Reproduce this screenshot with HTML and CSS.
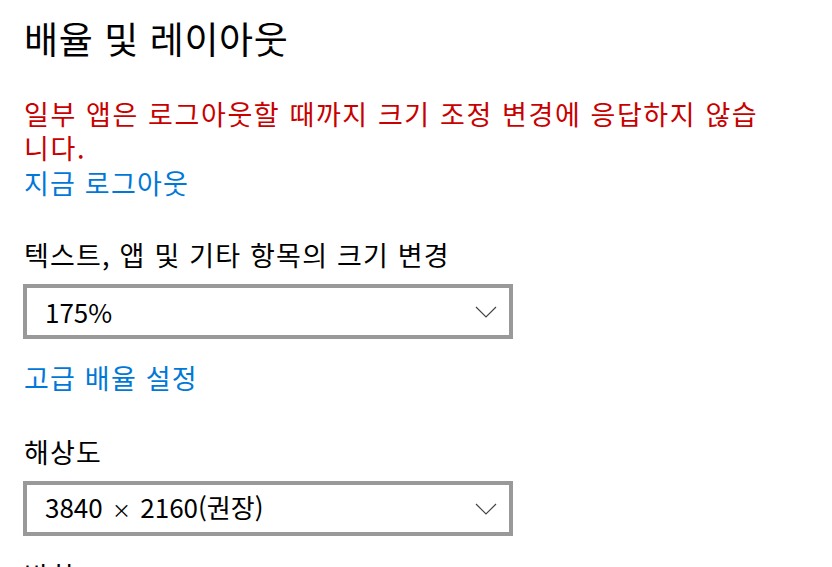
FILE: index.html
```html
<!DOCTYPE html>
<html lang="ko">
<head>
<meta charset="utf-8">
<link rel="stylesheet" href="styles.css">
</head>
<body>
<main class="page">
  <h1 class="title">배율 및 레이아웃</h1>
  <p class="warning">일부 앱은 로그아웃할 때까지 크기 조정 변경에 응답하지 않습니다.</p>
  <a class="link link-logout" href="#">지금 로그아웃</a>

  <div class="field field-scale">
    <div class="label">텍스트, 앱 및 기타 항목의 크기 변경</div>
    <div class="select">
      <span class="select-value">175%</span>
      <svg class="chevron" width="22" height="12" viewBox="0 0 22 12"><path d="M1 1 L11 11 L21 1" fill="none" stroke="#444" stroke-width="1.2"/></svg>
    </div>
  </div>

  <a class="link link-advanced" href="#">고급 배율 설정</a>

  <div class="field field-res">
    <div class="label">해상도</div>
    <div class="select">
      <span class="select-value">3840 <span class="times">×</span> 2160(권장)</span>
      <svg class="chevron" width="22" height="12" viewBox="0 0 22 12"><path d="M1 1 L11 11 L21 1" fill="none" stroke="#444" stroke-width="1.2"/></svg>
    </div>
  </div>

  <div class="field field-orient">
    <div class="label">방향</div>
  </div>
</main>
</body>
</html>
```

FILE: styles.css
```css
html, body {
  margin: 0;
  padding: 0;
  background: #ffffff;
}
body {
  font-family: "Noto Sans CJK KR", "Noto Sans", sans-serif;
  color: #000000;
  overflow: hidden;
}
.page {
  padding: 12px 0 0 24px;
  display: flex;
  flex-direction: column;
  align-items: flex-start;
}
.title {
  margin: 0;
  font-size: 37px;
  font-weight: 400;
  line-height: 52px;
  letter-spacing: 0.6px;
}
.warning {
  margin: 33px 0 0 0;
  width: 745px;
  font-size: 27px;
  line-height: 34px;
  letter-spacing: 1.6px;
  color: #c80000;
}
.link {
  font-size: 27px;
  line-height: 34px;
  letter-spacing: 1.2px;
  color: #0078d7;
  text-decoration: none;
}
.link-logout {
  margin-top: 1px;
}
.field {
  display: flex;
  flex-direction: column;
}
.field-scale {
  margin-top: 38px;
}
.label {
  font-size: 27px;
  line-height: 34px;
  letter-spacing: 1.2px;
}
.select {
  margin-top: 12px;
  margin-left: -1px;
  box-sizing: border-box;
  width: 490px;
  height: 55px;
  border: 4px solid #999999;
  display: flex;
  align-items: center;
  justify-content: space-between;
  padding: 0 12px 0 18px;
}
.select-value {
  font-size: 26px;
  line-height: 34px;
}
.times {
  font-size: 19px;
  padding: 0 2px;
}
.chevron {
  display: block;
}
.link-advanced {
  margin-top: 22px;
}
.field-res {
  margin-top: 40px;
}
.field-orient {
  margin-top: 23px;
}
```
